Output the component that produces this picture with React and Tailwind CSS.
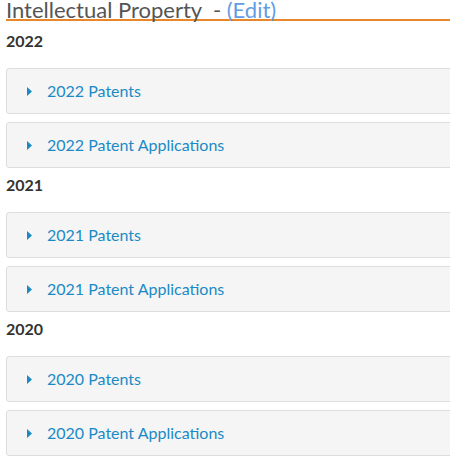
import React from "react";

const sections = [
  { year: "2022", items: ["2022 Patents", "2022 Patent Applications"] },
  { year: "2021", items: ["2021 Patents", "2021 Patent Applications"] },
  { year: "2020", items: ["2020 Patents", "2020 Patent Applications"] },
];

function Caret() {
  return (
    <svg width="5" height="9" viewBox="0 0 5 9" className="shrink-0">
      <path d="M0 0 L5 4.5 L0 9 Z" fill="#1a8ac6" />
    </svg>
  );
}

export default function App() {
  return (
    <div className="w-full overflow-hidden bg-white" style={{ fontFamily: "Lato, 'Open Sans', sans-serif" }}>
      <div className="w-[470px] pl-[6px]">
        {/* Title */}
        <h2 className="text-[22px] leading-[19px] text-[#555] border-b-2 border-[#e8872a] font-normal">
          Intellectual Property&nbsp; - <span className="text-[#5f9de6]">(Edit)</span>
        </h2>

        <div className="mt-[11px]">
          {sections.map((s) => (
            <div key={s.year}>
              <h3 className="text-[16px] leading-[18px] font-bold text-[#333] mb-[18px]">{s.year}</h3>
              {s.items.map((item) => (
                <div
                  key={item}
                  className="flex items-center h-[46px] mb-[8px] bg-[#f5f5f5] border border-[#dddddd] rounded-[3px] pl-[20px]"
                >
                  <Caret />
                  <span className="ml-[15px] text-[16px] text-[#1a8ac6]">{item}</span>
                </div>
              ))}
            </div>
          ))}
        </div>
      </div>
    </div>
  );
}
